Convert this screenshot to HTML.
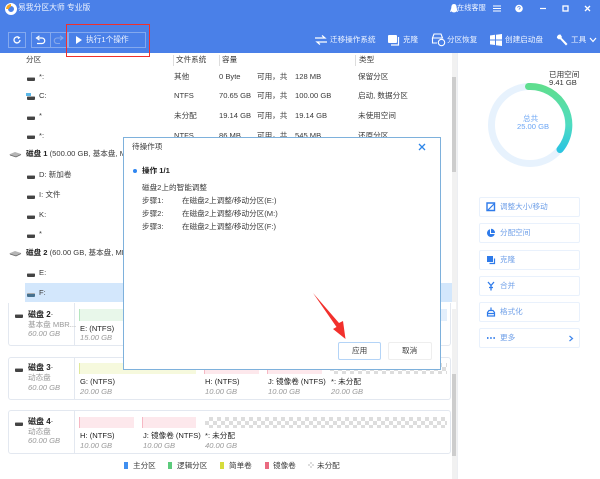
<!DOCTYPE html>
<html><head><meta charset="utf-8"><style>
html,body{margin:0;padding:0;background:#fff}
#p{position:relative;width:600px;height:479px;overflow:hidden;background:#fff;font-family:"Liberation Sans","Noto Sans CJK SC",sans-serif;font-size:7.6px;color:#3a3a3a;filter:blur(.35px)}
#p div,#p span.a,#p svg{position:absolute}
.t{position:absolute;white-space:nowrap;line-height:10px}
.w{color:#f0f5ff}
.b{font-weight:bold;color:#222}
.g{color:#999;font-style:italic}
.dr{position:absolute;width:8px;height:3px;background:#444;border-top:1px solid #aaa;border-radius:1px}
.card{left:8px;width:443px;background:#fff;border:1px solid #e3e8f0;border-radius:3px;box-sizing:border-box}
.bar{height:11px;box-sizing:border-box}
.chk{background-color:#fff;background-image:conic-gradient(#ddd 25%,#fff 0 50%,#ddd 0 75%,#fff 0);background-size:8px 8px}
.rb{left:479px;width:101px;height:20px;border:1px solid #e9f1fc;border-radius:2px;box-sizing:border-box}
.bl{color:#6e9fe8}
</style></head><body><div id="p">
<div style="left:0;top:0;width:600px;height:53px;background:#4a80e8"></div>
<svg style="left:4px;top:2px" width="14" height="14" viewBox="0 0 14 14"><circle cx="7" cy="7" r="4.500" fill="none" stroke="#fff" stroke-width="3"/><path d="M2 7A5 5 0 0 1 7 2L7 5A2 2 0 0 0 5 7Z" fill="#f6a623"/></svg>
<span class="t w" style="left:18px;top:3px;font-size:7.8px">易我分区大师 专业版</span>

<svg style="left:449px;top:3px" width="10" height="12" viewBox="0 0 10 12"><path d="M5 1C2.500 1 2.300 3.500 2.300 5L1 9C2 8.800 2.300 8.500 2.600 8.200 3 9.800 7 9.800 7.400 8.200 7.700 8.500 8 8.800 9 9L7.700 5C7.700 3.500 7.500 1 5 1Z" fill="#fff"/></svg>
<span class="t w" style="left:457px;top:3px;font-size:7.200px">在线客服</span>
<svg style="left:493px;top:3px" width="100" height="12" viewBox="0 0 100 12"><path d="M0 3H8M0 5.500H8M0 8H8" stroke="#fff" stroke-width="1"/><circle cx="26" cy="5.500" r="3.800" fill="#fff"/><path d="M24.600 4.600C25 3 27.600 3.400 27.200 5 27 5.600 26 5.600 26 6.600" stroke="#4a80e8" fill="none" stroke-width=".8"/><path d="M47 5.500H53" stroke="#fff" stroke-width="1.200"/><rect x="70" y="3" width="5" height="5" fill="none" stroke="#fff" stroke-width="1.300"/><path d="M92 3L97 8M97 3L92 8" stroke="#fff" stroke-width="1.300"/></svg>

<div style="left:8px;top:32px;width:18px;height:16px;border:1px solid #84a9ee;box-sizing:border-box"></div>
<svg style="left:12px;top:35px" width="10" height="10" viewBox="0 0 10 10"><path d="M8 5A3 3 0 1 1 6.800 2.500" fill="none" stroke="#fff" stroke-width="1.300"/><path d="M5.500 1L8.500 2.600 6 4.300Z" fill="#fff"/></svg>
<div style="left:31px;top:32px;width:37px;height:16px;border:1px solid #84a9ee;box-sizing:border-box"></div>
<div style="left:50px;top:32px;width:1px;height:16px;background:#84a9ee"></div>
<svg style="left:35px;top:35px" width="30" height="11" viewBox="0 0 30 11"><path d="M3 3H7A2.700 2.700 0 0 1 7 8.500H2" fill="none" stroke="#fff" stroke-width="1.200"/><path d="M4.500 .8L1.500 3 4.500 5.200" fill="none" stroke="#fff" stroke-width="1.200"/><path d="M27 3H22A2.700 2.700 0 0 0 22 8.500H25" fill="none" stroke="#86a8ea" stroke-width="1.100"/><path d="M25 .8L28 3 25 5.200" fill="none" stroke="#86a8ea" stroke-width="1.100"/></svg>
<div style="left:68px;top:32px;width:78px;height:16px;border:1px solid #84a9ee;box-sizing:border-box"></div>
<svg style="left:76px;top:36px" width="6" height="8" viewBox="0 0 6 8"><path d="M0 0L6 4 0 8Z" fill="#fff"/></svg>
<span class="t w" style="left:86px;top:35px;font-size:7.700px">执行1个操作</span>
<div style="left:66px;top:24px;width:84px;height:33px;border:1.500px solid #f0302c;box-sizing:border-box"></div>

<svg style="left:315px;top:34px" width="12" height="12" viewBox="0 0 12 12"><path d="M0 4H10L7 1.500M12 8H2L5 10.500" fill="none" stroke="#fff" stroke-width="1.200"/></svg>
<span class="t w" style="left:330px;top:35px">迁移操作系统</span>
<svg style="left:388px;top:34px" width="13" height="12" viewBox="0 0 13 12"><rect x="0" y="1" width="9" height="8" rx="1" fill="#fff"/><path d="M10.500 3V11H3" fill="none" stroke="#fff" stroke-width="1.200"/></svg>
<span class="t w" style="left:403px;top:35px">克隆</span>
<svg style="left:431px;top:33px" width="15" height="14" viewBox="0 0 15 14"><path d="M3 1H10L11.500 5H1.500ZM1.500 5V10H6" fill="none" stroke="#fff" stroke-width="1.100"/><circle cx="10.500" cy="9.500" r="3.200" fill="none" stroke="#fff" stroke-width="1.100"/></svg>
<span class="t w" style="left:447px;top:35px">分区恢复</span>
<svg style="left:490px;top:34px" width="12" height="12" viewBox="0 0 12 12"><path d="M0 1.500L5 .8V5.500H0ZM6 .7L12 0V5.500H6ZM0 6.500H5V11L0 10.400ZM6 6.500H12V12L6 11.200Z" fill="#fff"/></svg>
<span class="t w" style="left:505px;top:35px">创建启动盘</span>
<svg style="left:556px;top:34px" width="12" height="12" viewBox="0 0 12 12"><path d="M4.500 0.500A3 3 0 0 0 1 4L3 5.500 4 5 10 11.500 11.500 10 5.500 3.800 6 3Z" fill="#fff"/></svg>
<span class="t w" style="left:571px;top:35px">工具</span>
<svg style="left:589px;top:37px" width="8" height="6" viewBox="0 0 8 6"><path d="M1 1L4 4.500 7 1" fill="none" stroke="#fff" stroke-width="1.200"/></svg>

<!-- table header -->
<span class="t" style="left:26px;top:55px">分区</span>
<div style="left:173px;top:55px;width:1px;height:11px;background:#ddd"></div>
<span class="t" style="left:176px;top:55px">文件系统</span>
<div style="left:219px;top:55px;width:1px;height:11px;background:#ddd"></div>
<span class="t" style="left:222px;top:55px">容量</span>
<div style="left:355px;top:55px;width:1px;height:11px;background:#ddd"></div>
<span class="t" style="left:359px;top:55px">类型</span>

<!-- rows -->
<div class="dr" style="left:27px;top:77px"></div><span class="t" style="left:39px;top:72px">*:</span><span class="t" style="left:174px;top:72px">其他</span><span class="t" style="left:219px;top:72px">0 Byte</span><span class="t" style="left:257px;top:72px">可用，共</span><span class="t" style="left:295px;top:72px">128 MB</span><span class="t" style="left:358px;top:72px">保留分区</span>
<div class="dr" style="left:27px;top:96px"></div><div style="left:26px;top:93px;width:5px;height:3px;background:#5bb8e8"></div><span class="t" style="left:39px;top:91px">C:</span><span class="t" style="left:174px;top:91px">NTFS</span><span class="t" style="left:219px;top:91px">70.65 GB</span><span class="t" style="left:257px;top:91px">可用，共</span><span class="t" style="left:295px;top:91px">100.00 GB</span><span class="t" style="left:358px;top:91px">启动, 数据分区</span>
<div class="dr" style="left:27px;top:116px"></div><span class="t" style="left:39px;top:111px">*</span><span class="t" style="left:174px;top:111px">未分配</span><span class="t" style="left:219px;top:111px">19.14 GB</span><span class="t" style="left:257px;top:111px">可用，共</span><span class="t" style="left:295px;top:111px">19.14 GB</span><span class="t" style="left:358px;top:111px">未使用空间</span>
<div class="dr" style="left:27px;top:135px"></div><span class="t" style="left:39px;top:131px">*:</span><span class="t" style="left:174px;top:131px">NTFS</span><span class="t" style="left:219px;top:131px">86 MB</span><span class="t" style="left:257px;top:131px">可用，共</span><span class="t" style="left:295px;top:131px">545 MB</span><span class="t" style="left:358px;top:131px">还原分区</span>

<svg style="left:9px;top:151px" width="13" height="7" viewBox="0 0 13 7"><path d="M0 3.500L6 1 12 3 7 6Z" fill="#b5b5b5"/><path d="M1 4L7 6 12 3.500" stroke="#666" fill="none" stroke-width=".8"/></svg>
<span class="t" style="left:26px;top:149px"><b style="color:#222">磁盘 1</b> (500.00 GB, 基本盘, MBR)</span>
<div class="dr" style="left:27px;top:175px"></div><span class="t" style="left:39px;top:170px">D: 新加卷</span>
<div class="dr" style="left:27px;top:195px"></div><span class="t" style="left:39px;top:190px">I: 文件</span>
<div class="dr" style="left:27px;top:215px"></div><span class="t" style="left:39px;top:210px">K:</span>
<div class="dr" style="left:27px;top:234px"></div><span class="t" style="left:39px;top:229px">*</span>
<svg style="left:9px;top:250px" width="13" height="7" viewBox="0 0 13 7"><path d="M0 3.500L6 1 12 3 7 6Z" fill="#b5b5b5"/><path d="M1 4L7 6 12 3.500" stroke="#666" fill="none" stroke-width=".8"/></svg>
<span class="t" style="left:26px;top:248px"><b style="color:#222">磁盘 2</b> (60.00 GB, 基本盘, MBR)</span>
<div class="dr" style="left:27px;top:273px"></div><span class="t" style="left:39px;top:268px">E:</span>
<div style="left:25px;top:283px;width:427px;height:19px;background:#d3e7fc"></div>
<div class="dr" style="left:27px;top:293px;background:#47718f"></div><span class="t" style="left:39px;top:288px">F:</span>

<!-- cards -->
<div class="card" style="top:303px;height:43px;border-top:none;border-top-left-radius:0;border-top-right-radius:0"></div>
<div style="left:74px;top:303px;width:1px;height:43px;background:#e3e8f0"></div>
<div class="dr" style="left:15px;top:314px"></div>
<span class="t b" style="left:28px;top:310px;font-size:8px">磁盘 2<span style="font-weight:normal">·</span></span>
<span class="t" style="left:28px;top:320px;color:#999">基本盘 MBR...</span>
<span class="t g" style="left:28px;top:329px">60.00 GB</span>
<div class="bar" style="left:79px;top:309px;width:120px;height:12px;background:#e8f7ea;border-left:1px solid #b5e6bf"></div>
<div class="bar" style="left:441px;top:309px;width:6px;height:12px;background:#e3effc"></div>
<span class="t" style="left:80px;top:324px;color:#222">E: (NTFS)</span>
<span class="t g" style="left:80px;top:333px">15.00 GB</span>

<div class="card" style="top:357px;height:43px"></div>
<div style="left:74px;top:358px;width:1px;height:41px;background:#e3e8f0"></div>
<div class="dr" style="left:15px;top:368px"></div>
<span class="t b" style="left:28px;top:363px;font-size:8px">磁盘 3<span style="font-weight:normal">·</span></span>
<span class="t" style="left:28px;top:373px;color:#999">动态盘</span>
<span class="t g" style="left:28px;top:383px">60.00 GB</span>
<div class="bar" style="left:79px;top:363px;width:117px;background:#f6f9dd;border-left:1px solid #dfe89b"></div>
<div class="bar" style="left:204px;top:363px;width:55px;height:11px;background:#fde8ec;border-left:1px solid #f6b8c4"></div>
<div class="bar" style="left:267px;top:363px;width:55px;background:#fde8ec;border-left:1px solid #f6b8c4"></div>
<div class="bar chk" style="left:330px;top:363px;width:117px"></div>
<span class="t" style="left:80px;top:377px;color:#222">G: (NTFS)</span><span class="t g" style="left:80px;top:387px">20.00 GB</span>
<span class="t" style="left:205px;top:377px;color:#222">H: (NTFS)</span><span class="t g" style="left:205px;top:387px">10.00 GB</span>
<span class="t" style="left:268px;top:377px;color:#222">J: 镜像卷 (NTFS)</span><span class="t g" style="left:268px;top:387px">10.00 GB</span>
<span class="t" style="left:331px;top:377px;color:#222">*: 未分配</span><span class="t g" style="left:331px;top:387px">20.00 GB</span>

<div class="card" style="top:410px;height:44px"></div>
<div style="left:74px;top:411px;width:1px;height:42px;background:#e3e8f0"></div>
<div class="dr" style="left:15px;top:422px"></div>
<span class="t b" style="left:28px;top:417px;font-size:8px">磁盘 4<span style="font-weight:normal">·</span></span>
<span class="t" style="left:28px;top:427px;color:#999">动态盘</span>
<span class="t g" style="left:28px;top:436px">60.00 GB</span>
<div class="bar" style="left:79px;top:417px;width:55px;background:#fde8ec;border-left:1px solid #f6b8c4"></div>
<div class="bar" style="left:142px;top:417px;width:54px;background:#fde8ec;border-left:1px solid #f6b8c4"></div>
<div class="bar chk" style="left:205px;top:417px;width:242px"></div>
<span class="t" style="left:80px;top:431px;color:#222">H: (NTFS)</span><span class="t g" style="left:80px;top:441px">10.00 GB</span>
<span class="t" style="left:143px;top:431px;color:#222">J: 镜像卷 (NTFS)</span><span class="t g" style="left:143px;top:441px">10.00 GB</span>
<span class="t" style="left:205px;top:431px;color:#222">*: 未分配</span><span class="t g" style="left:205px;top:441px">40.00 GB</span>

<!-- legend -->
<div style="left:124px;top:462px;width:4px;height:7px;background:#3f8ff0"></div><span class="t" style="left:133px;top:461px">主分区</span>
<div style="left:168px;top:462px;width:4px;height:7px;background:#5ccb7c"></div><span class="t" style="left:177px;top:461px">逻辑分区</span>
<div style="left:220px;top:462px;width:4px;height:7px;background:#d6dc3c"></div><span class="t" style="left:229px;top:461px">简单卷</span>
<div style="left:265px;top:462px;width:4px;height:7px;background:#ea6a80"></div><span class="t" style="left:273px;top:461px">镜像卷</span>
<div class="chk" style="left:308px;top:462px;width:6px;height:6px;background-size:4px 4px"></div><span class="t" style="left:317px;top:461px">未分配</span>

<!-- scroll & side -->
<div style="left:452px;top:53px;width:5px;height:426px;background:#f1f1f1"></div>
<div style="left:452px;top:77px;width:4px;height:95px;background:#cdcdcd"></div>
<div style="left:452px;top:374px;width:4px;height:82px;background:#cdcdcd"></div>
<div style="left:452px;top:302px;width:4px;height:7px;background:#fff"></div>
<div style="left:457px;top:53px;width:1px;height:426px;background:#eceef2"></div>

<!-- donut -->
<svg style="left:485px;top:80px" width="90" height="90" viewBox="0 0 90 90"><defs><linearGradient id="gr" x1="0" y1="0" x2="0" y2="1"><stop offset="0" stop-color="#5fde8f"/><stop offset=".6" stop-color="#4fdcc0"/><stop offset="1" stop-color="#2cc5e0"/></linearGradient></defs><circle cx="45" cy="45" r="38.500" fill="none" stroke="#e7f2fd" stroke-width="7"/><path d="M43.500 6.500A38.500 38.500 0 0 1 75 69.500" fill="none" stroke="url(#gr)" stroke-width="7" stroke-linecap="round"/></svg>
<span class="t" style="left:549px;top:70px;color:#333">已用空间</span>
<span class="t" style="left:549px;top:78px;color:#333">9.41 GB</span>
<span class="t" style="left:523px;top:114px;color:#6aa5f5">总共</span>
<span class="t" style="left:517px;top:122px;color:#6aa5f5">25.00 GB</span>

<!-- right buttons -->
<div class="rb" style="top:197px"></div><div class="rb" style="top:223px"></div><div class="rb" style="top:250px"></div><div class="rb" style="top:276px"></div><div class="rb" style="top:302px"></div><div class="rb" style="top:328px"></div>
<svg style="left:486px;top:202px" width="10" height="10" viewBox="0 0 10 10"><path d="M1 1H8.500V8.500H1Z" fill="none" stroke="#2f7bea" stroke-width="1.400"/><path d="M2 8L8 2" stroke="#2f7bea" stroke-width="1.200"/></svg>
<span class="t bl" style="left:500px;top:202px">调整大小/移动</span>
<svg style="left:486px;top:228px" width="10" height="10" viewBox="0 0 10 10"><path d="M4 1.300A3.900 3.900 0 1 0 8.700 6H4Z" fill="#2f7bea"/><path d="M5 .8A4 4 0 0 1 9 5H5Z" fill="#2f7bea"/></svg>
<span class="t bl" style="left:500px;top:228px">分配空间</span>
<svg style="left:486px;top:255px" width="10" height="10" viewBox="0 0 10 10"><rect x="1" y="1" width="6" height="6" fill="#2f7bea"/><path d="M8.500 3.500V8.500H3.500" fill="none" stroke="#2f7bea" stroke-width="1.200"/></svg>
<span class="t bl" style="left:500px;top:255px">克隆</span>
<svg style="left:486px;top:281px" width="10" height="10" viewBox="0 0 10 10"><path d="M2 1L5 4.500 8 1M5 4.500V9.500M3 6.500H7" fill="none" stroke="#2f7bea" stroke-width="1.300"/></svg>
<span class="t bl" style="left:500px;top:281px">合并</span>
<svg style="left:486px;top:307px" width="10" height="10" viewBox="0 0 10 10"><path d="M5 .5V3M1.500 9V5.500L3 3.500H7L8.500 5.500V9ZM1 6.500H9" fill="none" stroke="#2f7bea" stroke-width="1.200"/></svg>
<span class="t bl" style="left:500px;top:307px">格式化</span>
<svg style="left:486px;top:333px" width="10" height="10" viewBox="0 0 10 10"><path d="M1 5H2.500M4.200 5H5.700M7.400 5H8.900" stroke="#2f7bea" stroke-width="1.800"/></svg>
<span class="t bl" style="left:500px;top:333px">更多</span>
<svg style="left:568px;top:335px" width="6" height="7" viewBox="0 0 6 7"><path d="M1.500 1L4.500 3.500 1.500 6" fill="none" stroke="#3f86ec" stroke-width="1.200"/></svg>

<!-- dialog -->
<div style="left:123px;top:137px;width:318px;height:233px;background:#fff;border:1px solid #7eb1dc;box-sizing:border-box"></div>
<span class="t" style="left:132px;top:142px">待操作项</span>
<svg style="left:418px;top:143px" width="8" height="8" viewBox="0 0 8 8"><path d="M1 1L7 7M7 1L1 7" stroke="#2f86e8" stroke-width="1.300"/></svg>
<div style="left:133px;top:169px;width:4px;height:4px;border-radius:50%;background:#2f86f0"></div>
<span class="t b" style="left:142px;top:166px">操作 1/1</span>
<span class="t" style="left:142px;top:183px">磁盘2上的智能调整</span>
<span class="t" style="left:142px;top:196px">步骤1:</span><span class="t" style="left:182px;top:196px">在磁盘2上调整/移动分区(E:)</span>
<span class="t" style="left:142px;top:209px">步骤2:</span><span class="t" style="left:182px;top:209px">在磁盘2上调整/移动分区(M:)</span>
<span class="t" style="left:142px;top:222px">步骤3:</span><span class="t" style="left:182px;top:222px">在磁盘2上调整/移动分区(F:)</span>
<div style="left:338px;top:342px;width:43px;height:18px;background:#fff;border:1px solid #b4d4f7;border-radius:2px;box-sizing:border-box"></div>
<span class="t" style="left:352px;top:346px">应用</span>
<div style="left:388px;top:342px;width:44px;height:18px;background:#fff;border:1px solid #eee;border-radius:2px;box-sizing:border-box"></div>
<span class="t" style="left:402px;top:346px">取消</span>
<svg style="left:310px;top:290px" width="40" height="52" viewBox="0 0 40 52"><path d="M3 3L29 33 33 31 35.500 49 23 39 26.500 37Z" fill="#f2302c"/></svg>
</div></body></html>
